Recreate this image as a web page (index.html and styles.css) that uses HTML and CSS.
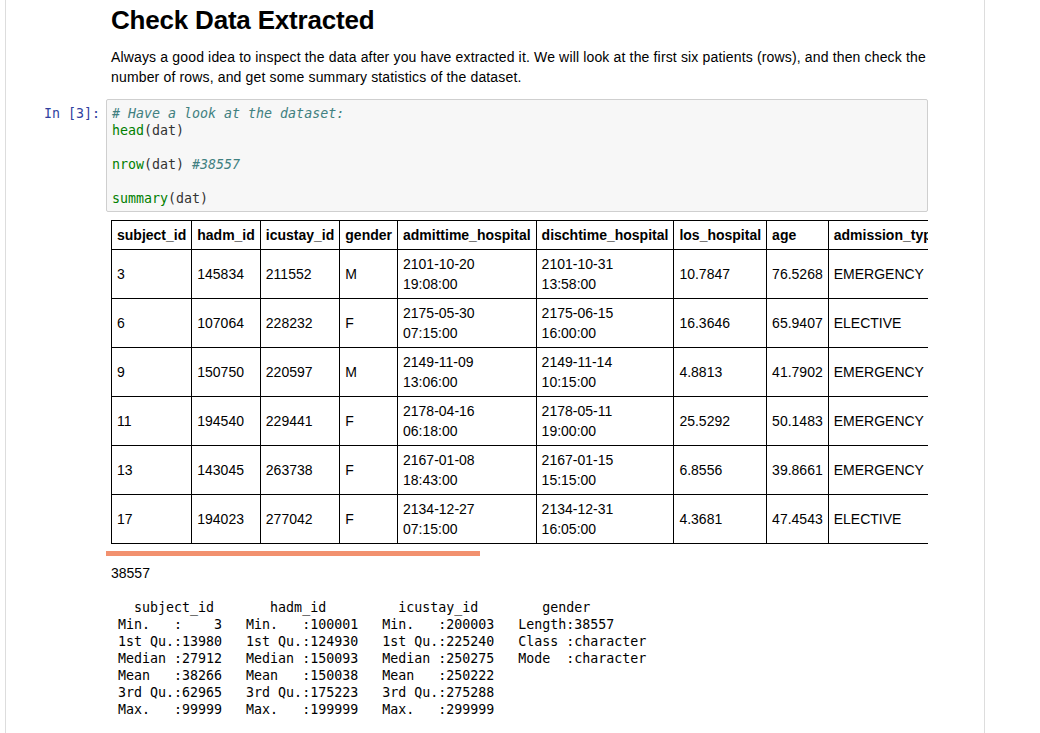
FILE: index.html
```html
<!DOCTYPE html>
<html lang="en">
<head>
<meta charset="utf-8">
<title>Check Data Extracted</title>
<link rel="stylesheet" href="styles.css">
</head>
<body>
<div class="notebook">
  <div class="cell md-cell">
    <div class="prompt"></div>
    <div class="md">
      <h1>Check Data Extracted</h1>
      <p>Always a good idea to inspect the data after you have extracted it. We will look at the first six patients (rows), and then check the number of rows, and get some summary statistics of the dataset.</p>
    </div>
  </div>

  <div class="cell code-cell">
    <div class="prompt in-prompt">In&nbsp;[3]:</div>
    <div class="input"><pre class="code"><span class="cm-comment"># Have a look at the dataset:</span>
<span class="cm-fn">head</span><span class="cm-punct">(dat)</span>

<span class="cm-fn">nrow</span><span class="cm-punct">(dat)</span> <span class="cm-comment">#38557</span>

<span class="cm-fn">summary</span><span class="cm-punct">(dat)</span></pre></div>
  </div>

  <div class="cell output-cell">
    <div class="prompt"></div>
    <div class="outputs">
      <div class="table-scroll">
        <table class="df">
          <thead>
            <tr><th>subject_id</th><th>hadm_id</th><th>icustay_id</th><th>gender</th><th>admittime_hospital</th><th>dischtime_hospital</th><th>los_hospital</th><th>age</th><th>admission_type</th><th>ethnicity</th><th>hospital_expire_flag</th><th>hospstay_seq</th><th>first_hosp_stay</th><th>intime_icu</th><th>outtime_icu</th><th>los_icu</th><th>icustay_seq</th><th>first_icu_stay</th></tr>
          </thead>
          <tbody>
            <tr><td>3</td><td>145834</td><td>211552</td><td>M</td><td>2101-10-20 19:08:00</td><td>2101-10-31 13:58:00</td><td>10.7847</td><td>76.5268</td><td>EMERGENCY</td><td>WHITE</td><td>0</td><td>1</td><td>TRUE</td><td>2101-10-20 19:10:11</td><td>2101-10-26 20:43:09</td><td>6.0646</td><td>1</td><td>TRUE</td></tr>
            <tr><td>6</td><td>107064</td><td>228232</td><td>F</td><td>2175-05-30 07:15:00</td><td>2175-06-15 16:00:00</td><td>16.3646</td><td>65.9407</td><td>ELECTIVE</td><td>WHITE</td><td>0</td><td>1</td><td>TRUE</td><td>2175-05-30 21:30:54</td><td>2175-06-03 13:39:54</td><td>3.6729</td><td>1</td><td>TRUE</td></tr>
            <tr><td>9</td><td>150750</td><td>220597</td><td>M</td><td>2149-11-09 13:06:00</td><td>2149-11-14 10:15:00</td><td>4.8813</td><td>41.7902</td><td>EMERGENCY</td><td>UNKNOWN/NOT SPECIFIED</td><td>1</td><td>1</td><td>TRUE</td><td>2149-11-09 13:07:02</td><td>2149-11-14 20:52:14</td><td>5.3231</td><td>1</td><td>TRUE</td></tr>
            <tr><td>11</td><td>194540</td><td>229441</td><td>F</td><td>2178-04-16 06:18:00</td><td>2178-05-11 19:00:00</td><td>25.5292</td><td>50.1483</td><td>EMERGENCY</td><td>WHITE</td><td>0</td><td>1</td><td>TRUE</td><td>2178-04-16 06:19:32</td><td>2178-04-17 20:21:05</td><td>1.5844</td><td>1</td><td>TRUE</td></tr>
            <tr><td>13</td><td>143045</td><td>263738</td><td>F</td><td>2167-01-08 18:43:00</td><td>2167-01-15 15:15:00</td><td>6.8556</td><td>39.8661</td><td>EMERGENCY</td><td>WHITE</td><td>0</td><td>1</td><td>TRUE</td><td>2167-01-08 18:44:25</td><td>2167-01-12 10:43:31</td><td>3.6660</td><td>1</td><td>TRUE</td></tr>
            <tr><td>17</td><td>194023</td><td>277042</td><td>F</td><td>2134-12-27 07:15:00</td><td>2134-12-31 16:05:00</td><td>4.3681</td><td>47.4543</td><td>ELECTIVE</td><td>WHITE</td><td>0</td><td>1</td><td>TRUE</td><td>2134-12-27 16:21:55</td><td>2134-12-29 18:04:03</td><td>2.0681</td><td>1</td><td>TRUE</td></tr>
          </tbody>
        </table>
      </div>
      <div class="hscroll"><div class="hscroll-thumb"></div></div>
      <div class="out-text">38557</div>
      <pre class="out-pre">   subject_id       hadm_id         icustay_id        gender         
 Min.   :    3   Min.   :100001   Min.   :200003   Length:38557      
 1st Qu.:13980   1st Qu.:124930   1st Qu.:225240   Class :character  
 Median :27912   Median :150093   Median :250275   Mode  :character  
 Mean   :38266   Mean   :150038   Mean   :250222                     
 3rd Qu.:62965   3rd Qu.:175223   3rd Qu.:275288                     
 Max.   :99999   Max.   :199999   Max.   :299999                     </pre>
    </div>
  </div>
</div>
</body>
</html>
```

FILE: styles.css
```css
html, body {
  margin: 0;
  padding: 0;
  background: #ffffff;
}

body {
  font-family: "Liberation Sans", Arial, sans-serif;
  font-size: 14px;
  line-height: 20px;
  color: #000000;
}

.notebook {
  margin-left: 5px;
  width: 980px;
  box-sizing: border-box;
  min-height: 100vh;
  border-left: 1px solid #dddddd;
  border-right: 1px solid #dddddd;
  padding-top: 5px;
}

.cell {
  display: flex;
  align-items: flex-start;
}

.prompt {
  flex: 0 0 100px;
  box-sizing: border-box;
}

.md,
.input,
.outputs {
  flex: 0 0 822px;
  min-width: 0;
}

/* markdown */
.md {
  box-sizing: border-box;
  padding-left: 5px;
}

.md h1 {
  margin: 0;
  font-size: 26px;
  line-height: 30px;
  font-weight: bold;
  letter-spacing: -0.2px;
}

.md p {
  margin: 12px 0 0;
  line-height: 20px;
  letter-spacing: 0.155px;
}

/* code cell */
.code-cell {
  margin-top: 12px;
}

.in-prompt {
  font-family: "DejaVu Sans Mono", monospace;
  font-size: 13.3px;
  line-height: 17px;
  color: #303f9f;
  text-align: right;
  padding: 6px 6px 0 0;
  white-space: nowrap;
}

.input {
  box-sizing: border-box;
  border: 1px solid #cfcfcf;
  border-radius: 2px;
  background: #f7f7f7;
  padding: 5px 5px 4px;
}

.code {
  margin: 0;
  font-family: "DejaVu Sans Mono", monospace;
  font-size: 13.3px;
  line-height: 17px;
  color: #333333;
}

.cm-comment {
  color: #408080;
  font-style: italic;
}

.cm-fn {
  color: #008000;
}

.cm-punct {
  color: #333333;
}

/* outputs */
.output-cell {
  margin-top: 8px;
}

.table-scroll {
  overflow: hidden;
  padding-left: 5px;
}

.df {
  border-collapse: collapse;
  font-size: 14px;
  line-height: 20px;
  color: #000000;
}

.df th,
.df td {
  border: 1px solid #000000;
  padding: 4px 5px;
  text-align: left;
  vertical-align: middle;
}

.df th {
  font-weight: bold;
}

.df td:nth-child(n+10) {
  white-space: nowrap;
}

.hscroll {
  margin-top: 7px;
  height: 5px;
}

.hscroll-thumb {
  width: 374px;
  height: 5px;
  background: #f2916f;
}

.out-text {
  margin-top: 7px;
  padding-left: 5px;
  line-height: 20px;
}

.out-pre {
  margin: 16px 0 0;
  padding-left: 4px;
  font-family: "DejaVu Sans Mono", monospace;
  font-size: 13.3px;
  line-height: 17px;
  color: #000000;
}
```
